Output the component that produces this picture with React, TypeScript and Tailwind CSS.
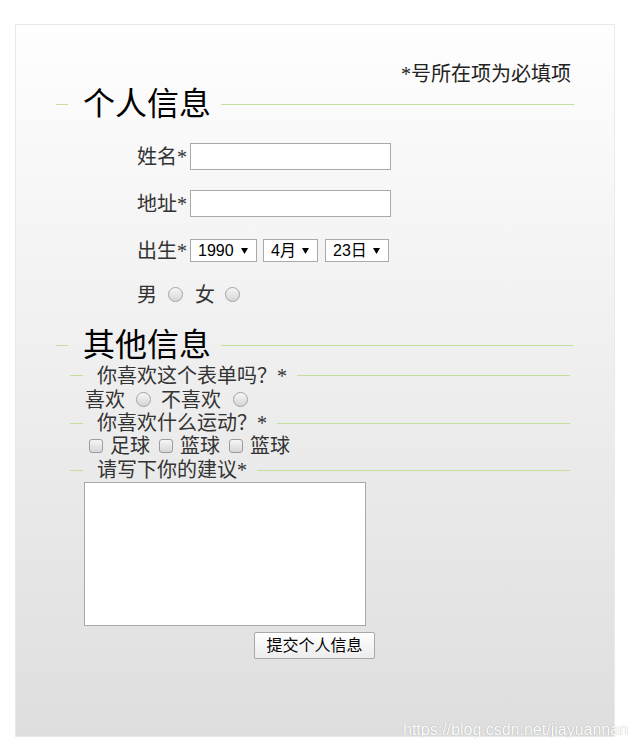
import React from "react";

const serif = "font-['Liberation_Serif','Noto_Sans_CJK_SC',serif]";
const sans = "font-['Liberation_Sans','Noto_Sans_CJK_SC',sans-serif]";

function Tri() {
  return (
    <svg width="7" height="6" viewBox="0 0 7 6" className="shrink-0">
      <path d="M0 0h7L3.5 6z" fill="#000" />
    </svg>
  );
}

function Sel({ w, label }: { w: string; label: string }) {
  return (
    <div
      className={`flex items-center justify-between h-[23px] ${w} border border-[#a9a9a9] bg-white pl-[7px] pr-[8px] ${sans} text-[16px] leading-[21px] text-black`}
    >
      <span>{label}</span>
      <Tri />
    </div>
  );
}

function Radio() {
  return (
    <span className="inline-block w-[15px] h-[15px] shrink-0 rounded-full border border-[#a3a3a3] bg-linear-to-b from-[#f6f6f6] to-[#d6d6d6]" />
  );
}

function Check() {
  return (
    <span className="inline-block w-[14px] h-[14px] shrink-0 rounded-[3px] border border-[#9c9c9c] bg-linear-to-b from-[#f6f6f6] to-[#d6d6d6]" />
  );
}

function SubLegend({ text, h }: { text: string; h: string }) {
  return (
    <div className={`flex items-center ${h} ml-[14px] mr-[4px]`}>
      <div className="w-[13px] h-px bg-[#c4de9c]" />
      <span className="pl-[14px] pr-[10px] text-[20px] leading-[20px] text-[#333] whitespace-nowrap">
        {text}
      </span>
      <div className="flex-1 h-px bg-[#c4de9c]" />
    </div>
  );
}

function BigLegend({ text, mt }: { text: string; mt: string }) {
  return (
    <div className={`flex items-center h-[40px] ${mt}`}>
      <div className="w-[12px] h-px bg-[#c4de9c]" />
      <span className="pl-[15px] pr-[10px] text-[32px] leading-[40px] text-black whitespace-nowrap">
        {text}
      </span>
      <div className="flex-1 h-px bg-[#c4de9c]" />
    </div>
  );
}

export default function App() {
  return (
    <div className={`relative min-h-[750px] bg-white pt-[24px] pl-[15px] ${serif}`}>
      <div className="w-[600px] h-[713px] border border-[#e9e9e9] bg-linear-to-b from-[#fefefe] to-[#dedede] px-[40px] pt-[39px]">
        <div className="flex justify-end pr-[3px] h-[20px] items-center text-[20px] leading-[20px] text-[#222]">
          *号所在项为必填项
        </div>

        <BigLegend text="个人信息" mt="mt-0" />

        <div className="ml-[81px] text-[20px] text-[#333]">
          <div className="flex items-center h-[27px] mt-[19px]">
            <span className="w-[53px] shrink-0 whitespace-nowrap leading-[20px]">姓名*</span>
            <div className="w-[201px] h-[27px] border border-[#a9a9a9] bg-white" />
          </div>
          <div className="flex items-center h-[27px] mt-[20px]">
            <span className="w-[53px] shrink-0 whitespace-nowrap leading-[20px]">地址*</span>
            <div className="w-[201px] h-[27px] border border-[#a9a9a9] bg-white" />
          </div>
          <div className="flex items-center h-[27px] mt-[20px]">
            <span className="w-[53px] shrink-0 whitespace-nowrap leading-[20px]">出生*</span>
            <Sel w="w-[67px]" label="1990" />
            <span className="ml-[6px] flex">
              <Sel w="w-[55px]" label="4月" />
            </span>
            <span className="ml-[7px] flex">
              <Sel w="w-[64px]" label="23日" />
            </span>
          </div>
          <div className="flex items-center h-[27px] mt-[17px]">
            <span className="leading-[20px]">男</span>
            <span className="ml-[11px] flex">
              <Radio />
            </span>
            <span className="ml-[12px] leading-[20px]">女</span>
            <span className="ml-[10px] flex">
              <Radio />
            </span>
          </div>
        </div>

        <BigLegend text="其他信息" mt="mt-[17px]" />

        <SubLegend text="你喜欢这个表单吗？*" h="h-[21px]" />
        <div className="flex items-center h-[27px] ml-[29px] text-[20px] leading-[20px] text-[#333]">
          <span>喜欢</span>
          <span className="ml-[11px] flex">
            <Radio />
          </span>
          <span className="ml-[10px]">不喜欢</span>
          <span className="ml-[12px] flex">
            <Radio />
          </span>
        </div>
        <SubLegend text="你喜欢什么运动？*" h="h-[20px]" />
        <div className="flex items-center h-[26px] ml-[33px] text-[20px] leading-[20px] text-[#333]">
          <Check />
          <span className="ml-[7px]">足球</span>
          <span className="ml-[9px] flex">
            <Check />
          </span>
          <span className="ml-[7px]">篮球</span>
          <span className="ml-[9px] flex">
            <Check />
          </span>
          <span className="ml-[7px]">篮球</span>
        </div>
        <SubLegend text="请写下你的建议*" h="h-[22px]" />

        <div className="ml-[28px] mt-[1px] w-[282px] h-[144px] border border-[#a9a9a9] bg-white" />
        <div className="ml-[198px] mt-[6px]">
          <button
            type="button"
            className={`w-[121px] h-[27px] border border-[#a9a9a9] rounded-[2px] bg-linear-to-b from-[#ffffff] to-[#ececec] ${sans} text-[16px] leading-[20px] text-black flex items-center justify-center`}
          >
            提交个人信息
          </button>
        </div>
      </div>

      <div
        className={`absolute left-[403px] top-[720px] ${sans} text-[16px] leading-[20px] text-white [text-shadow:0_0_1px_rgba(0,0,0,0.35)] whitespace-nowrap`}
      >
        https://blog.csdn.net/jiayuannan
      </div>
    </div>
  );
}
